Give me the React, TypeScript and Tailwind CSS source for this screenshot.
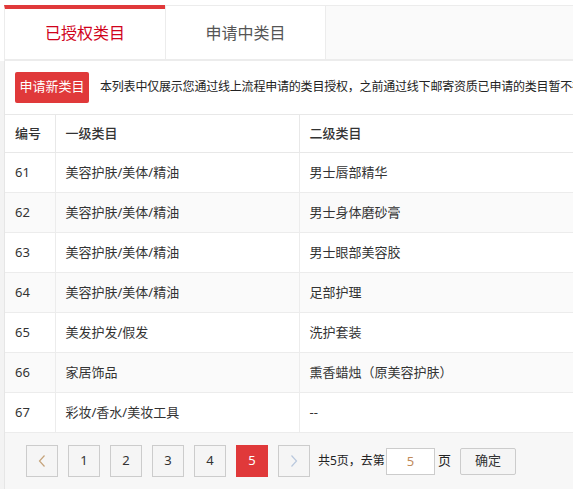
import React from "react";

const rows = [
  { id: 61, first: "美容护肤/美体/精油", second: "男士唇部精华" },
  { id: 62, first: "美容护肤/美体/精油", second: "男士身体磨砂膏" },
  { id: 63, first: "美容护肤/美体/精油", second: "男士眼部美容胶" },
  { id: 64, first: "美容护肤/美体/精油", second: "足部护理" },
  { id: 65, first: "美发护发/假发", second: "洗护套装" },
  { id: 66, first: "家居饰品", second: "熏香蜡烛（原美容护肤）" },
  { id: 67, first: "彩妆/香水/美妆工具", second: "--" },
];

const font = { fontFamily: '"Noto Sans", "Noto Sans CJK SC", sans-serif' };

function PageBtn({ children, active }: { children: React.ReactNode; active?: boolean }) {
  return (
    <button
      type="button"
      className={`flex h-[32px] w-[32px] items-center justify-center border text-[13px] ${
        active
          ? "border-[#e0393a] bg-[#e0393a] text-white"
          : "border-[#cccccc] bg-[#f5f5f5] text-[#333]"
      }`}
    >
      {children}
    </button>
  );
}

export default function App() {
  return (
    <div className="h-[489px] w-[573px] overflow-hidden bg-white" style={font}>
      {/* tabs */}
      <div className="ml-[4px] mt-[5px] flex h-[56px] w-[800px] border-b-2 border-[#ececec]">
        <div className="flex w-[161px] items-center justify-center border-l border-t-4 border-l-[#ececec] border-t-[#e0393a] bg-white pb-[3px] text-[16px] text-[#d0021b]">
          已授权类目
        </div>
        <div className="flex w-[161px] items-center justify-center border-x border-t border-[#ececec] bg-white text-[16px] text-[#555]">
          申请中类目
        </div>
        <div className="flex-1 border-t border-[#ececec] bg-[#fafafa]" />
      </div>

      <div className="flex">
        <div className="w-[4px] shrink-0 bg-[#f3f3f3]" />
        <div className="w-[800px] shrink-0 border-l border-[#e6e6e6]">
          {/* toolbar */}
          <div className="flex h-[53px] items-center gap-[11px] px-[10px] pb-[1px]">
            <button
              type="button"
              className="h-[31px] w-[74px] shrink-0 rounded-[2px] bg-[#e0393a] text-[13px] text-white"
            >
              申请新类目
            </button>
            <span className="whitespace-nowrap text-[12px] tracking-[-0.2px] text-[#222]">
              本列表中仅展示您通过线上流程申请的类目授权，之前通过线下邮寄资质已申请的类目暂不在此列表中展示
            </span>
          </div>

          {/* table */}
          <table className="w-full border-collapse text-[13px] text-[#333]">
            <thead>
              <tr className="h-[38px] border-y border-[#e8e8e8] bg-white">
                <th className="w-[50px] pl-[10px] text-left font-medium">编号</th>
                <th className="w-[244px] border-l border-[#e8e8e8] pl-[10px] text-left font-medium">
                  一级类目
                </th>
                <th className="border-l border-[#e8e8e8] pl-[10px] text-left font-medium">二级类目</th>
              </tr>
            </thead>
            <tbody>
              {rows.map((r, i) => (
                <tr
                  key={r.id}
                  className={`h-[40px] border-b border-[#ececec] ${i % 2 === 1 ? "bg-[#fafafa]" : "bg-white"}`}
                >
                  <td className="pl-[10px]">{r.id}</td>
                  <td className="border-l border-[#ececec] pl-[10px]">{r.first}</td>
                  <td className="border-l border-[#ececec] pl-[10px]">{r.second}</td>
                </tr>
              ))}
            </tbody>
          </table>

          {/* pagination */}
          <div className="flex h-[56px] items-center gap-[10px] bg-[#f7f7f7] pl-[21px]">
            <PageBtn>
              <svg width="10" height="14" viewBox="0 0 10 14" fill="none" stroke="#c5a37a" strokeWidth="1.2">
                <path d="M7.5 1.5 2.5 7l5 5.5" />
              </svg>
            </PageBtn>
            <PageBtn>1</PageBtn>
            <PageBtn>2</PageBtn>
            <PageBtn>3</PageBtn>
            <PageBtn>4</PageBtn>
            <PageBtn active>5</PageBtn>
            <PageBtn>
              <svg width="10" height="14" viewBox="0 0 10 14" fill="none" stroke="#b9c8dd" strokeWidth="1.2">
                <path d="M2.5 1.5 7.5 7l-5 5.5" />
              </svg>
            </PageBtn>
            <div className="-ml-[2px] flex items-center text-[12px] text-[#222]">
              <span>共5页，去第</span>
              <input
                readOnly
                value="5"
                className="ml-[1px] h-[27px] w-[49px] border border-[#cccccc] bg-white text-center text-[13px] text-[#c08a5a] outline-none"
              />
              <span className="ml-[3px] text-[13px]">页</span>
              <button
                type="button"
                className="ml-[9px] h-[27px] w-[56px] rounded-[2px] border border-[#cccccc] bg-[#f5f5f5] text-[13px] text-[#333]"
              >
                确定
              </button>
            </div>
          </div>
        </div>
      </div>
    </div>
  );
}
